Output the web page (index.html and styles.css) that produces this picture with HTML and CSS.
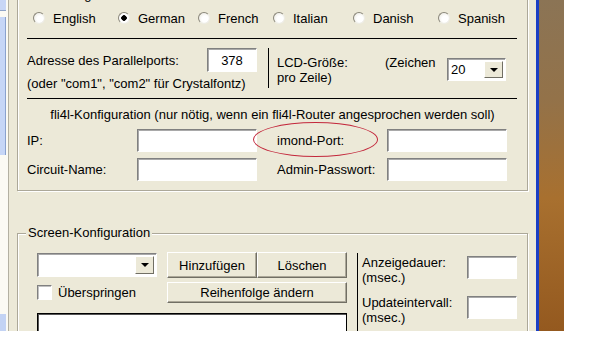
FILE: index.html
```html
<!DOCTYPE html>
<html lang="de">
<head>
  <meta charset="UTF-8">
  <title>LCD-Einstellungen</title>
  <link rel="stylesheet" href="styles.css">
</head>
<body>
  <div class="screen">
    <div class="taskpane">
      <div class="taskpane-top"></div>
      <div class="taskpane-panel"></div>
      <div class="taskpane-bottom"></div>
    </div>
    <div class="pane-gap"></div>
    <div class="pane-rule"></div>

    <div class="dialog">
      <div class="group group-settings">
        <span class="group-caption caption-top">Einstellungen</span>

        <div class="lang-row">
          <label class="radio"><input type="radio" name="lang">English</label>
          <label class="radio"><input type="radio" name="lang" checked>German</label>
          <label class="radio"><input type="radio" name="lang">French</label>
          <label class="radio"><input type="radio" name="lang">Italian</label>
          <label class="radio"><input type="radio" name="lang">Danish</label>
          <label class="radio"><input type="radio" name="lang">Spanish</label>
        </div>

        <div class="rule-h rule-first"></div>

        <div class="port-block">
          <div class="port-left">
            <div class="port-row">
              <span class="port-label">Adresse des Parallelports:</span>
              <input class="edit port-edit" type="text" value="378">
            </div>
            <div class="hint">(oder "com1", "com2" für Crystalfontz)</div>
          </div>
          <div class="rule-v port-rule"></div>
          <div class="lcd-label">LCD-Größe:<br>pro Zeile)</div>
          <div class="lcd-unit">(Zeichen</div>
          <div class="combo lcd-combo">
            <span class="combo-text">20</span>
            <span class="combo-btn"></span>
          </div>
        </div>

        <div class="rule-h"></div>

        <div class="fli-title">fli4l-Konfiguration (nur nötig, wenn ein fli4l-Router angesprochen werden soll)</div>

        <div class="fli-row">
          <span class="fli-label">IP:</span>
          <input class="edit fli-edit" type="text">
          <span class="fli-label fli-label-right">imond-Port:<span class="mark"></span></span>
          <input class="edit fli-edit" type="text">
        </div>
        <div class="fli-row">
          <span class="fli-label">Circuit-Name:</span>
          <input class="edit fli-edit" type="text">
          <span class="fli-label fli-label-right">Admin-Passwort:</span>
          <input class="edit fli-edit" type="text">
        </div>
      </div>

      <div class="group group-screen">
        <span class="group-caption">Screen-Konfiguration</span>

        <div class="screen-body">
          <div class="screen-left">
            <div class="screen-row">
              <div class="combo screen-combo">
                <span class="combo-text"></span>
                <span class="combo-btn"></span>
              </div>
              <button class="btn btn-half">Hinzufügen</button>
              <button class="btn btn-half">Löschen</button>
            </div>
            <div class="screen-row screen-row-second">
              <label class="check"><input type="checkbox">Überspringen</label>
              <button class="btn btn-wide">Reihenfolge ändern</button>
            </div>
            <div class="listbox"></div>
          </div>

          <div class="rule-v screen-rule"></div>

          <div class="screen-right">
            <div class="param">
              <span class="param-label">Anzeigedauer:<br>(msec.)</span>
              <input class="edit param-edit" type="text">
            </div>
            <div class="param param-second">
              <span class="param-label">Updateintervall:<br>(msec.)</span>
              <input class="edit param-edit" type="text">
            </div>
          </div>
        </div>
      </div>
    </div>

    <div class="desk-edge"></div>
    <div class="desk"></div>
  </div>
</body>
</html>
```

FILE: styles.css
```css
* {
  box-sizing: border-box;
}

body {
  margin: 0;
  background: #fff;
  color: #000;
  font-family: "Liberation Sans", Arial, sans-serif;
  font-size: 13px;
  overflow: hidden;
}

.screen {
  display: flex;
  height: 331px;
  overflow: hidden;
}

/* linke Leiste */
.taskpane {
  width: 6px;
  display: flex;
  flex-direction: column;
  background: #fbfaf4;
}

.taskpane-top {
  height: 11px;
  background: #c8d6f6;
  border-bottom: 1px solid #8ea3c8;
}

.taskpane-panel {
  height: 138px;
  margin-top: 6px;
  background: #c6d6f7;
  border-right: 1px solid #8aa2cf;
}

.taskpane-bottom {
  height: 17px;
  margin-top: auto;
  background: #c3d3f4;
}

.pane-gap {
  width: 2px;
  background: #fbfaf4;
}

.pane-rule {
  width: 1px;
  background: #b3b0a2;
}

.dialog {
  width: 527px;
  background: #ece9d8;
  padding-left: 8px;
}

.desk-edge {
  width: 3px;
  background: #1b3fc4;
}

.desk {
  width: 25px;
  background: linear-gradient(180deg, #8b7455 0%, #937249 30%, #a8702f 60%, #94591f 100%);
}

/* Gruppen */
.group {
  position: relative;
  width: 511px;
  border: 1px solid #aca899;
  box-shadow: 1px 1px 0 #fff, inset 1px 1px 0 #fff;
}

.group-caption {
  position: absolute;
  top: -9px;
  left: 8px;
  padding: 0 2px;
  line-height: 15px;
  background: #ece9d8;
}

.caption-top {
  top: -12px;
}

.group-settings {
  margin-top: -2px;
  padding: 9px 9px 9px 9px;
}

.group-screen {
  margin-top: 42px;
  height: 130px;
  padding: 18px 9px 0 19px;
}

/* Sprachen */
.lang-row {
  display: grid;
  grid-template-columns: 85px 80px 75px 80px 85px 1fr;
  height: 20px;
  align-items: center;
  padding-left: 6px;
}

.radio {
  display: flex;
  align-items: center;
  gap: 8px;
}

.radio input {
  appearance: none;
  width: 12px;
  height: 12px;
  margin: 0;
  border-radius: 50%;
  border: 1px solid;
  border-color: #8a877a #eeede6 #eeede6 #8a877a;
  background: radial-gradient(circle at 60% 60%, #fff 0 3px, #f1f0ea 6px);
}

.radio input:checked {
  background: radial-gradient(circle, #000 0 2.5px, #fff 3px);
}

.rule-h {
  height: 1px;
  width: 490px;
  background: #000;
}

.rule-first {
  margin-top: 10px;
}

.rule-v {
  width: 1px;
  background: #000;
}

/* Parallelport */
.port-block {
  display: flex;
  align-items: flex-start;
  padding: 9px 0 7px;
}

.port-left {
  width: 230px;
}

.port-row {
  display: flex;
  align-items: center;
  height: 24px;
}

.port-label {
  width: 180px;
}

.port-edit {
  width: 50px;
  height: 24px;
  text-align: center;
}

.hint {
  margin-top: 4px;
  line-height: 15px;
}

.port-rule {
  height: 40px;
  margin: 0 8px 0 11px;
}

.lcd-label {
  width: 108px;
  margin-top: 7px;
  line-height: 15px;
}

.lcd-unit {
  width: 62px;
  margin-top: 7px;
  line-height: 15px;
}

.lcd-combo {
  width: 59px;
  height: 23px;
  margin-top: 10px;
}

/* Eingabefelder */
.edit {
  border: 1px solid;
  border-color: #808080 #fff #fff #808080;
  box-shadow: inset 1px 1px 0 #a9a9a9;
  background: #fff;
  font: inherit;
  color: #000;
  padding: 0 3px;
  margin: 0;
  outline: none;
}

.combo {
  display: flex;
  padding: 2px;
  background: #fff;
  border: 1px solid;
  border-color: #808080 #fff #fff #808080;
  box-shadow: inset 1px 1px 0 #a9a9a9;
}

.combo-text {
  flex: 1;
  padding-left: 1px;
  line-height: 17px;
}

.combo-btn {
  width: 19px;
  display: flex;
  align-items: center;
  justify-content: center;
  background: #ece9d8;
  border: 1px solid;
  border-color: #fff #716f64 #716f64 #fff;
}

.combo-btn::after {
  content: "";
  border-left: 4px solid transparent;
  border-right: 4px solid transparent;
  border-top: 4px solid #000;
}

/* fli4l */
.fli-title {
  margin-top: 8px;
  line-height: 16px;
  text-align: center;
}

.fli-row {
  display: flex;
  height: 23px;
  margin-top: 6px;
}

.fli-label {
  position: relative;
  width: 110px;
  line-height: 23px;
}

.fli-label-right {
  margin-left: 20px;
}

.fli-edit {
  width: 120px;
  height: 23px;
}

.mark {
  position: absolute;
  left: -24px;
  top: -7px;
  width: 125px;
  height: 35px;
  border: 1px solid #c3283c;
  border-radius: 50%;
}

/* Screen-Konfiguration */
.screen-body {
  display: flex;
}

.screen-left {
  width: 310px;
}

.screen-row {
  display: flex;
  align-items: center;
  height: 26px;
}

.screen-row-second {
  height: 21px;
  margin-top: 4px;
}

.screen-combo {
  width: 120px;
  height: 24px;
  margin-right: 10px;
}

.btn {
  height: 100%;
  padding: 0;
  font: inherit;
  color: #000;
  background: #ece9d8;
  border: 1px solid;
  border-color: #fff #716f64 #716f64 #fff;
  box-shadow: inset -1px -1px 0 #aca899;
}

.btn-half {
  width: 90px;
}

.btn-wide {
  width: 180px;
}

.check {
  display: flex;
  align-items: center;
  gap: 6px;
  width: 130px;
}

.check input {
  appearance: none;
  width: 15px;
  height: 15px;
  margin: 0;
  background: #fff;
  border: 1px solid;
  border-color: #808080 #fff #fff #808080;
  box-shadow: inset 1px 1px 0 #c0c0c0;
}

.listbox {
  height: 60px;
  margin-top: 10px;
  background: #fff;
  border: 1px solid #000;
  box-shadow: inset 1px 1px 0 #555;
}

.screen-rule {
  height: 100px;
  margin: 1px 0 0 10px;
}

.screen-right {
  width: 155px;
  margin-left: 4px;
  padding-top: 3px;
}

.param {
  display: flex;
  justify-content: space-between;
  align-items: flex-start;
}

.param-second {
  margin-top: 10px;
}

.param-label {
  line-height: 15px;
}

.param-edit {
  width: 50px;
  height: 23px;
  margin-top: 1px;
}
```
